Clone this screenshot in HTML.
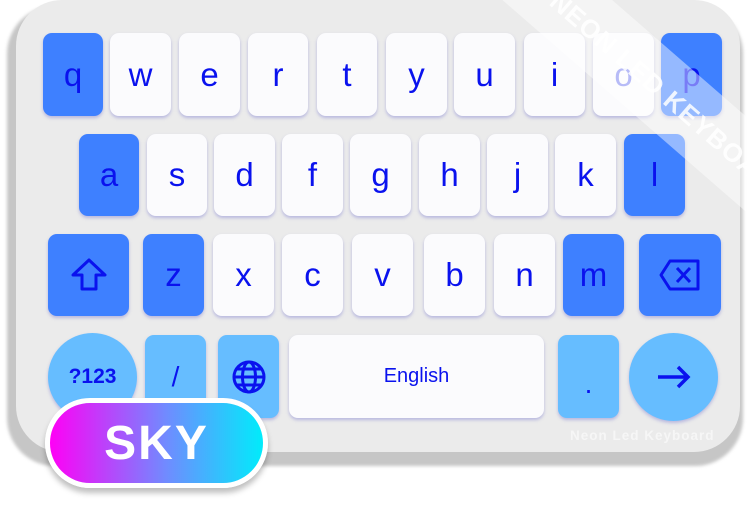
<!DOCTYPE html>
<html><head><style>
*{margin:0;padding:0;box-sizing:border-box}
body{width:752px;height:505px;background:#fff;position:relative;overflow:hidden;font-family:"Liberation Sans",sans-serif}
.shadow{position:absolute;left:7px;top:6px;width:736px;height:460px;background:#c6c6c6;border-radius:48px;filter:blur(1.5px)}
.body{position:absolute;left:16px;top:0px;width:724px;height:452px;background:#ebebeb;border-radius:46px;overflow:hidden}
.k{position:absolute;border-radius:9px;display:flex;align-items:center;justify-content:center;color:#0a12ee;font-size:33px;box-shadow:0 2px 3px rgba(90,90,200,.35)}
.w{background:#fbfbfd}
.b{background:#3e80ff}
.l{background:#66bdff}
.c{border-radius:50%}
.band{position:absolute;left:460px;top:62px;width:420px;height:72px;background:rgba(255,255,255,.45);transform:rotate(41deg);transform-origin:50% 50%;display:flex;align-items:center;justify-content:center;color:rgba(255,255,255,.85);font-weight:bold;font-size:26px;letter-spacing:1px}
.wm{position:absolute;left:570px;top:428px;color:#f6f6f6;font-weight:bold;font-size:13.5px;letter-spacing:1px}
.pill{position:absolute;left:45px;top:398px;width:223px;height:90px;border-radius:45px;border:5px solid #fff;background:linear-gradient(90deg,#ff00f6,#6f8cff 55%,#00ecfb);box-shadow:0 5px 6px rgba(0,0,0,.25);display:flex;align-items:center;justify-content:center;color:#fff;font-weight:bold;font-size:48px;letter-spacing:2px}
</style></head><body>
<div class="shadow"></div>
<div class="body"></div>
<div class="k b" style="left:43px;top:33px;width:60px;height:83px">q</div>
<div class="k w" style="left:110px;top:33px;width:61px;height:83px">w</div>
<div class="k w" style="left:179px;top:33px;width:61px;height:83px">e</div>
<div class="k w" style="left:248px;top:33px;width:60px;height:83px">r</div>
<div class="k w" style="left:317px;top:33px;width:60px;height:83px">t</div>
<div class="k w" style="left:386px;top:33px;width:61px;height:83px">y</div>
<div class="k w" style="left:454px;top:33px;width:61px;height:83px">u</div>
<div class="k w" style="left:524px;top:33px;width:61px;height:83px">i</div>
<div class="k w" style="left:593px;top:33px;width:61px;height:83px;color:#7c84f0">o</div>
<div class="k b" style="left:661px;top:33px;width:61px;height:83px">p</div>
<div class="k b" style="left:79px;top:134px;width:60px;height:82px">a</div>
<div class="k w" style="left:147px;top:134px;width:60px;height:82px">s</div>
<div class="k w" style="left:214px;top:134px;width:61px;height:82px">d</div>
<div class="k w" style="left:282px;top:134px;width:61px;height:82px">f</div>
<div class="k w" style="left:350px;top:134px;width:61px;height:82px">g</div>
<div class="k w" style="left:419px;top:134px;width:61px;height:82px">h</div>
<div class="k w" style="left:487px;top:134px;width:61px;height:82px">j</div>
<div class="k w" style="left:555px;top:134px;width:61px;height:82px">k</div>
<div class="k b" style="left:624px;top:134px;width:61px;height:82px">l</div>
<div class="k b" style="left:48px;top:234px;width:81px;height:82px"><svg width="40" height="36" viewBox="0 0 40 36"><path d="M20 3 L36 18 H27 V32 H13 V18 H4 Z" fill="none" stroke="#0a12ee" stroke-width="3" stroke-linejoin="round"/></svg></div>
<div class="k b" style="left:143px;top:234px;width:61px;height:82px">z</div>
<div class="k w" style="left:213px;top:234px;width:61px;height:82px">x</div>
<div class="k w" style="left:282px;top:234px;width:61px;height:82px">c</div>
<div class="k w" style="left:352px;top:234px;width:61px;height:82px">v</div>
<div class="k w" style="left:424px;top:234px;width:61px;height:82px">b</div>
<div class="k w" style="left:494px;top:234px;width:61px;height:82px">n</div>
<div class="k b" style="left:563px;top:234px;width:61px;height:82px">m</div>
<div class="k b" style="left:639px;top:234px;width:82px;height:82px"><svg width="44" height="34" viewBox="0 0 44 34"><path d="M12 3 H40 V31 H12 L3 17 Z" fill="none" stroke="#0a12ee" stroke-width="3" stroke-linejoin="round"/><path d="M19 10 L32 24 M32 10 L19 24" stroke="#0a12ee" stroke-width="3"/></svg></div>
<div class="k l c" style="left:48px;top:333px;width:89px;height:88px;font-size:21px;font-weight:bold">?123</div>
<div class="k l" style="left:145px;top:335px;width:61px;height:83px;font-size:28px">/</div>
<div class="k l" style="left:218px;top:335px;width:61px;height:83px"><svg width="36" height="36" viewBox="0 0 36 36" fill="none" stroke="#0a12ee" stroke-width="3"><circle cx="18" cy="18" r="15"/><ellipse cx="18" cy="18" rx="6.5" ry="15"/><path d="M3 18H33M6 10H30M6 26H30"/></svg></div>
<div class="k w" style="left:289px;top:335px;width:255px;height:83px;font-size:20px">English</div>
<div class="k l" style="left:558px;top:335px;width:61px;height:83px;font-size:28px;align-items:flex-end;padding-bottom:18px">.</div>
<div class="k l c" style="left:629px;top:333px;width:89px;height:88px"><svg width="36" height="24" viewBox="0 0 36 24" fill="none" stroke="#0a12ee" stroke-width="3.5"><path d="M2 12H32M22 2L32 12L22 22"/></svg></div>
<div class="band">NEON LED KEYBOARD</div>
<div class="wm">Neon Led Keyboard</div>
<div class="pill">SKY</div>
</body></html>
